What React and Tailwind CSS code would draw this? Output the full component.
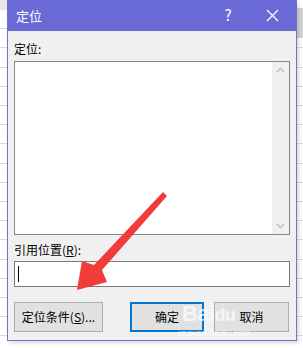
import React from 'react';

function Arrow() {
  return (
    <svg className="absolute left-0 top-0 pointer-events-none" width="303" height="348" viewBox="0 0 303 348">
      <polygon
        points="163,192 167,196 102,270 107,282 77,290 82,261 94,265"
        fill="#f23b3b"
      />
    </svg>
  );
}

function Scrollbar() {
  return (
    <div className="w-[17px] h-full bg-[#f0f0f0] flex flex-col items-center justify-between py-[5px]">
      <svg width="9" height="6" viewBox="0 0 9 6">
        <path d="M1 5 L4.5 1.5 L8 5" stroke="#c2c2c2" strokeWidth="1.6" fill="none" />
      </svg>
      <svg width="9" height="6" viewBox="0 0 9 6">
        <path d="M1 1 L4.5 4.5 L8 1" stroke="#c2c2c2" strokeWidth="1.6" fill="none" />
      </svg>
    </div>
  );
}

export default function App() {
  return (
    <div className="relative w-[303px] h-[348px] overflow-hidden bg-white bg-[repeating-linear-gradient(to_bottom,transparent_0_9px,#d9d9d9_9px_10px,transparent_10px_19.2px)] font-['Microsoft_YaHei','Noto_Sans_CJK_SC','Noto_Sans',sans-serif]">
      {/* column header shade beside the dialog */}
      <div className="absolute right-0 top-[8px] w-[7px] h-[30px] bg-[#d4d4d4]" />
      <div className="absolute left-0 top-0 w-[7px] h-[10px] bg-[#e8e8e8]" />

      <div className="absolute left-[7px] top-0 w-[290px] h-[341px] border border-[#7070d8] border-t-0 bg-[#f0f0f0] flex flex-col shadow-[2px_2px_4px_rgba(0,0,0,0.15)]">
        {/* title bar */}
        <div className="h-[31px] bg-[#6a6ad6] flex items-center text-white text-[13px] pl-[8px] shrink-0">
          <span>定位</span>
          <span className="ml-auto w-[20px] text-center text-[15px] mr-[28px]">?</span>
          <svg className="mr-[17px]" width="13" height="13" viewBox="0 0 13 13">
            <path d="M1 1 L12 12 M12 1 L1 12" stroke="white" strokeWidth="1.3" />
          </svg>
        </div>

        <div className="px-[6px] flex flex-col text-[12px] text-black">
          <div className="h-[30px] flex items-center pt-[6px]">定位:</div>
          <div className="h-[174px] border border-[#828790] bg-white flex justify-end">
            <Scrollbar />
          </div>
          <div className="h-[26px] flex items-center pt-[4px]">
            引用位置(<span className="underline">R</span>):
          </div>
          <div className="h-[26px] border border-[#7a7a7a] bg-white flex items-center pl-[3px]">
            <div className="w-px h-[16px] bg-black" />
          </div>

          <div className="flex mt-[15px] h-[30px]">
            <button className="w-[89px] h-full border border-[#adadad] bg-[#e1e1e1] text-[12px]">
              定位条件(<span className="underline">S</span>)...
            </button>
            <button className="ml-[27px] w-[74px] h-full border-2 border-[#0078d7] bg-[#e1e1e1] text-[12px]">
              确定
            </button>
            <button className="ml-[10px] w-[75px] h-full border border-[#adadad] bg-[#e1e1e1] text-[12px]">
              取消
            </button>
          </div>
        </div>
      </div>

      {/* watermark */}
      <div className="absolute left-[182px] top-[303px] text-white/70 text-[22px] font-bold leading-none tracking-tight font-['Liberation_Sans',sans-serif]">
        Bai<span className="text-[18px]">du</span>
      </div>
      <div className="absolute left-[178px] top-[329px] text-[9px] text-white/70 leading-none font-['Liberation_Sans',sans-serif]">
        jingyan.baidu.com
      </div>

      <Arrow />
    </div>
  );
}
